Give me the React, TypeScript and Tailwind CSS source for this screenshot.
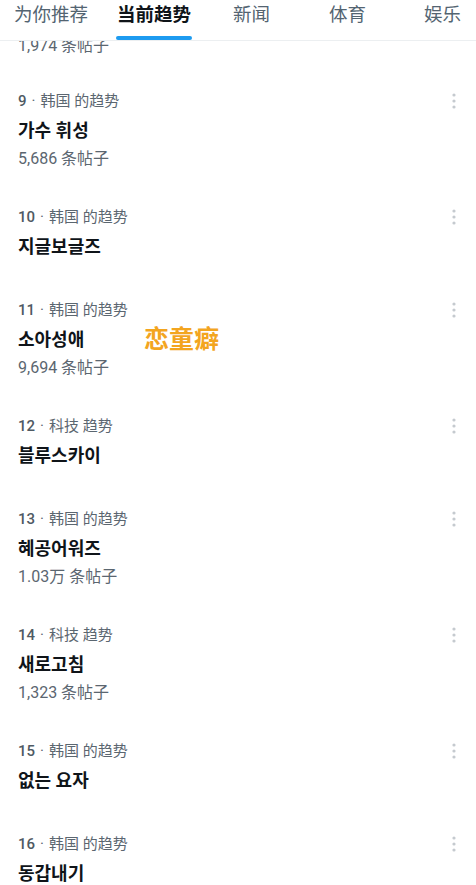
const tabs = [
  { label: "为你推荐", active: false, gap: "ml-[14px]" },
  { label: "当前趋势", active: true, gap: "ml-[29px]" },
  { label: "新闻", active: false, gap: "ml-[42px]" },
  { label: "体育", active: false, gap: "ml-[59px]" },
  { label: "娱乐", active: false, gap: "ml-[58px]" },
];

interface Trend {
  rank: number;
  category: string;
  title: string;
  posts?: string;
  note?: string;
}

const trends: Trend[] = [
  { rank: 9, category: "韩国 的趋势", title: "가수 휘성", posts: "5,686 条帖子" },
  { rank: 10, category: "韩国 的趋势", title: "지글보글즈" },
  { rank: 11, category: "韩国 的趋势", title: "소아성애", posts: "9,694 条帖子", note: "恋童癖" },
  { rank: 12, category: "科技 趋势", title: "블루스카이" },
  { rank: 13, category: "韩国 的趋势", title: "혜공어워즈", posts: "1.03万 条帖子" },
  { rank: 14, category: "科技 趋势", title: "새로고침", posts: "1,323 条帖子" },
  { rank: 15, category: "韩国 的趋势", title: "없는 요자" },
  { rank: 16, category: "韩国 的趋势", title: "동갑내기" },
];

function MoreIcon() {
  return (
    <svg width="4" height="16" viewBox="0 0 4 16" className="shrink-0">
      <circle cx="2" cy="2" r="1.6" fill="#c5cacf" />
      <circle cx="2" cy="8" r="1.6" fill="#c5cacf" />
      <circle cx="2" cy="14" r="1.6" fill="#c5cacf" />
    </svg>
  );
}

function TabBar() {
  return (
    <div className="flex h-[41px] shrink-0 items-stretch border-b border-[#eceff1] bg-white">
      {tabs.map((tab) => (
        <div key={tab.label} className={`${tab.gap} flex flex-col justify-between`}>
          <span
            className={
              tab.active
                ? "pt-[2px] text-[18.5px] leading-[26px] font-semibold text-[#0f1419]"
                : "pt-[2px] text-[18.5px] leading-[26px] text-[#536471]"
            }
          >
            {tab.label}
          </span>
          {tab.active ? <div className="-mx-px h-[4px] rounded-full bg-[#1d9bf0]" /> : <div className="h-[4px]" />}
        </div>
      ))}
    </div>
  );
}

function TrendRow({ trend }: { trend: Trend }) {
  return (
    <div className="flex flex-col py-[19px] pl-[18px] pr-[20px]">
      <div className="flex h-[20px] items-center justify-between">
        <span className="text-[15px] leading-[20px] text-[#5b6670]">
          <span className="font-medium text-[#4f5a63]">{trend.rank}</span>
          <span className="mx-[5px]">·</span>
          {trend.category}
        </span>
        <MoreIcon />
      </div>
      <div className="relative mt-[5px] h-[30px]">
        <span className="font-['Roboto','Noto_Sans_CJK_KR',sans-serif] text-[18px] leading-[30px] font-semibold text-[#0f1419]">
          {trend.title}
        </span>
        {trend.note && (
          <span className="absolute top-0 left-[126px] text-[25px] leading-[30px] font-bold text-[#f3a51f]">
            {trend.note}
          </span>
        )}
      </div>
      {trend.posts && (
        <span className="mt-[3px] text-[16px] leading-[20px] text-[#5b6670]">{trend.posts}</span>
      )}
    </div>
  );
}

export default function App() {
  return (
    <div className="flex h-[885px] w-[476px] flex-col overflow-hidden bg-white font-['Roboto','Noto_Sans_CJK_SC','Noto_Sans_CJK_KR',sans-serif]">
      <TabBar />
      <div className="h-[31px] shrink-0 overflow-hidden pl-[18px]">
        <div className="-mt-[5px] text-[16px] leading-[20px] text-[#5b6670]">1,974 条帖子</div>
      </div>
      {trends.map((trend) => (
        <TrendRow key={trend.rank} trend={trend} />
      ))}
    </div>
  );
}
